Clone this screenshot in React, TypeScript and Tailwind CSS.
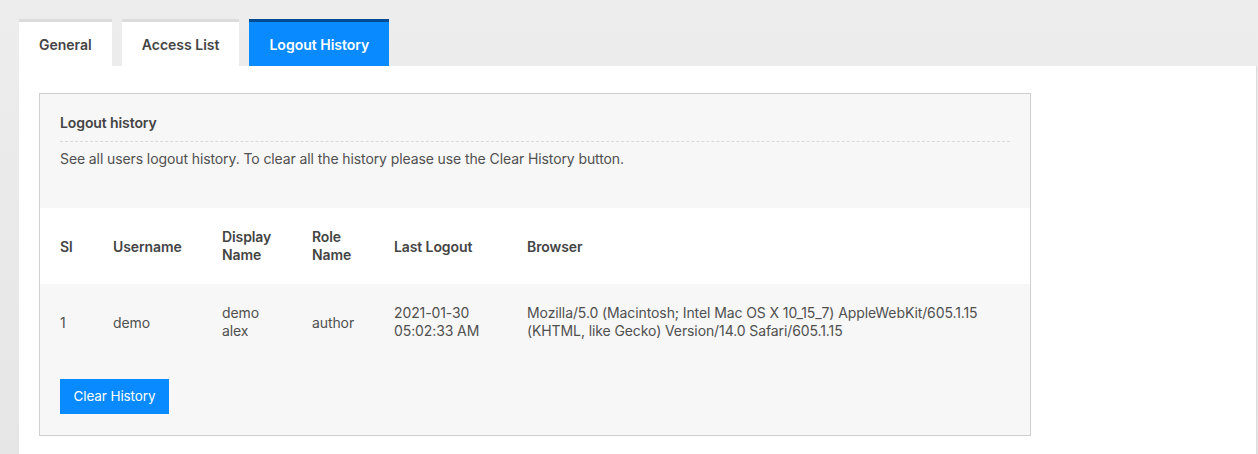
const tabs = ['General', 'Access List', 'Logout History']

const rows = [
  {
    sl: '1',
    username: 'demo',
    display: ['demo', 'alex'],
    role: 'author',
    last: ['2021-01-30', '05:02:33 AM'],
    browser:
      'Mozilla/5.0 (Macintosh; Intel Mac OS X 10_15_7) AppleWebKit/605.1.15 (KHTML, like Gecko) Version/14.0 Safari/605.1.15',
  },
]

export default function App() {
  return (
    <div className="h-[454px] overflow-hidden bg-gradient-to-b from-[#ededed] to-[#e6e6e6] pt-[19px] pl-[19px] pr-[1px] font-['Inter',sans-serif] text-[#444]">
      <div className="flex gap-[10px]">
        {tabs.map((t, i) => {
          const active = i === 2
          return (
            <div
              key={t}
              className={`flex h-[47px] items-center border-t-[3px] px-5 text-[14px] font-semibold ${
                active ? 'border-[#004b92] bg-[#0a8aff] text-white' : 'border-[#dcdcdc] bg-white text-[#444]'
              }`}
            >
              {t}
            </div>
          )
        })}
      </div>

      <div className="h-full border-r border-[#dcdcdc] bg-white px-5 pt-[27px]">
        <div className="w-[992px] border border-[#cfcfcf] bg-[#f7f7f7] tracking-[-0.1px]">
          <div className="px-5 pt-[18px] pb-[39px]">
            <h2 className="pb-[8px] text-[14px] font-semibold text-[#444]">Logout history</h2>
            <div className="border-t border-dashed border-[#dadada]" />
            <p className="pt-[6px] text-[14px] text-[#505050]">
              See all users logout history. To clear all the history please use the Clear History button.
            </p>
          </div>

          <table className="w-full border-collapse text-left text-[14px]">
            <thead>
              <tr className="h-[76px] bg-white">
                <th className="w-[73px] pl-5 font-semibold">Sl</th>
                <th className="w-[109px] font-semibold">Username</th>
                <th className="w-[90px] font-semibold leading-[18px]">
                  Display
                  <br />
                  Name
                </th>
                <th className="w-[82px] font-semibold leading-[18px]">
                  Role
                  <br />
                  Name
                </th>
                <th className="w-[133px] font-semibold">Last Logout</th>
                <th className="pr-5 font-semibold">Browser</th>
              </tr>
            </thead>
            <tbody>
              {rows.map((r) => (
                <tr key={r.sl} className="h-[76px] align-middle text-[#505050]">
                  <td className="pl-5">{r.sl}</td>
                  <td>{r.username}</td>
                  <td className="leading-[18px]">
                    {r.display[0]}
                    <br />
                    {r.display[1]}
                  </td>
                  <td>{r.role}</td>
                  <td className="leading-[18px]">
                    {r.last[0]}
                    <br />
                    {r.last[1]}
                  </td>
                  <td className="pr-5 leading-[18px]">{r.browser}</td>
                </tr>
              ))}
            </tbody>
          </table>

          <div className="px-5 pt-[19px] pb-[21px]">
            <button
              type="button"
              className="h-[35px] w-[109px] bg-[#0a8aff] text-[13.5px] text-white"
            >
              Clear History
            </button>
          </div>
        </div>
      </div>
    </div>
  )
}
